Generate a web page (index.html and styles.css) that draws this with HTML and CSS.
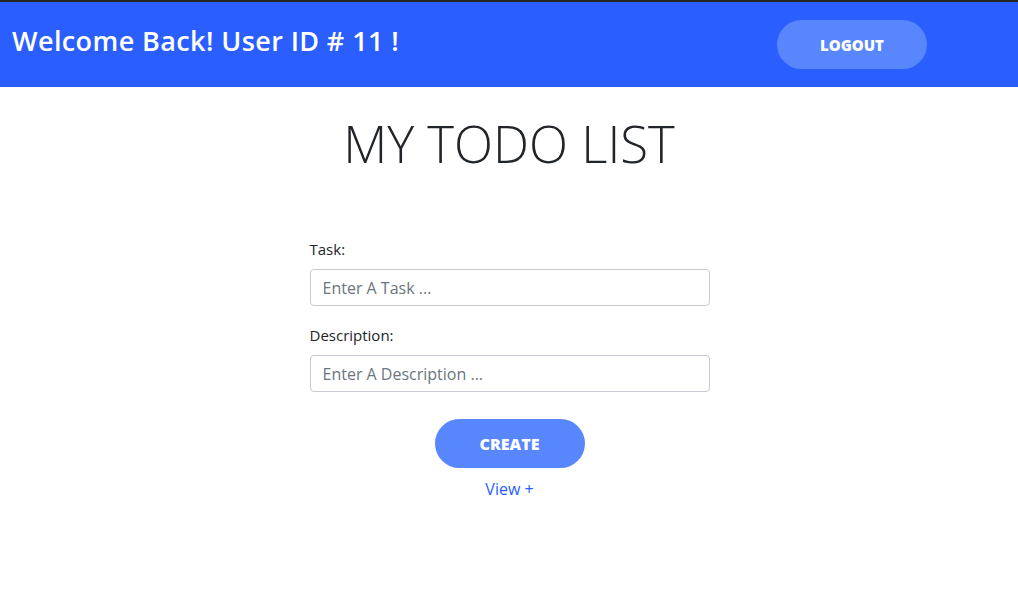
FILE: index.html
```html
<!DOCTYPE html>
<html lang="en">
<head>
<meta charset="utf-8">
<title>My Todo List</title>
<link rel="stylesheet" href="styles.css">
</head>
<body>
<header class="topbar">
  <h2 class="welcome">Welcome Back! User ID # 11 !</h2>
  <button class="logout">LOGOUT</button>
</header>
<main class="content">
  <h1 class="title">MY TODO LIST</h1>
  <form class="todo-form">
    <label class="field-label" for="task">Task:</label>
    <input class="field-input" id="task" type="text" placeholder="Enter A Task ...">
    <label class="field-label" for="desc">Description:</label>
    <input class="field-input" id="desc" type="text" placeholder="Enter A Description ...">
    <div class="actions">
      <button class="create" type="button">CREATE</button>
      <a class="view-link" href="#">View +</a>
    </div>
  </form>
</main>
</body>
</html>
```

FILE: styles.css
```css
* { box-sizing: border-box; }
html, body { margin: 0; padding: 0; background: #fff; }
body {
  font-family: "Open Sans", "Noto Sans", sans-serif;
  color: #212529;
}
.topbar {
  height: 87px;
  background: #2a5efe;
  border-top: 2px solid #242424;
  display: flex;
  align-items: flex-start;
  padding: 0 91px 0 12px;
  justify-content: space-between;
}
.welcome {
  margin: 20px 0 0 0;
  font-size: 27px;
  font-weight: 600;
  color: #fff;
  letter-spacing: 0.4px;
}
.logout {
  margin-top: 18px;
  width: 150px;
  height: 49px;
  border: none;
  border-radius: 25px;
  background: #5886fc;
  color: #fff;
  font-family: inherit;
  font-weight: 800;
  font-size: 15px;
}
.content {
  display: flex;
  flex-direction: column;
  align-items: center;
}
.title {
  margin: 26px 0 0 0;
  font-size: 51px;
  font-weight: 300;
  color: #212529;
  line-height: 1.2;
}
.todo-form {
  width: 400px;
  margin: 64px 0 0 1px;
  display: flex;
  flex-direction: column;
}
.field-label {
  font-size: 15px;
  color: #212529;
  line-height: 22px;
  margin-bottom: 9px;
}
.field-input {
  height: 37px;
  border: 1px solid #c6cad2;
  border-radius: 4px;
  padding: 0 12px;
  font-family: inherit;
  font-size: 16px;
  margin-bottom: 18px;
  color: #212529;
}
.field-input::placeholder { color: #6c757d; }
.actions {
  display: flex;
  flex-direction: column;
  align-items: center;
  margin-top: 9px;
}
.create {
  width: 150px;
  height: 49px;
  border: none;
  border-radius: 25px;
  background: #5886fc;
  color: #fff;
  font-family: inherit;
  font-weight: 800;
  font-size: 16px;
}
.view-link {
  margin-top: 10px;
  color: #2a5efe;
  text-decoration: none;
  font-size: 16px;
}
```
